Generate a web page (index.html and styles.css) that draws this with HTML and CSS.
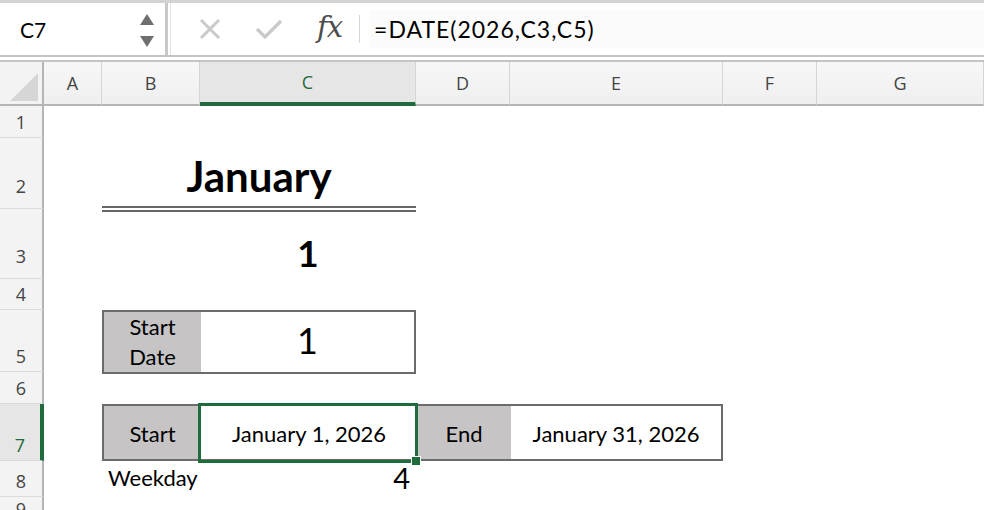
FILE: index.html
```html
<!DOCTYPE html>
<html>
<head>
	<meta charset="utf-8">
	<title>Calendar - DATE</title>
	<link rel="stylesheet" href="styles.css">
</head>
<body>
	<div class="toolbar">
		<div class="namebox">
			<span class="ref">C7</span>
			<div class="spin">
				<svg width="16" height="34" viewBox="0 0 16 34">
					<polygon points="8,1 15,12 1,12" fill="#6f6f6f"/>
					<polygon points="1,23 15,23 8,34" fill="#6f6f6f"/>
				</svg>
			</div>
		</div>
		<div class="fbar">
			<svg class="ico-x" width="22" height="22" viewBox="0 0 22 22">
				<path d="M2 2 L20 20 M20 2 L2 20" stroke="#c9c9c9" stroke-width="3" fill="none"/>
			</svg>
			<svg class="ico-ok" width="28" height="22" viewBox="0 0 28 22">
				<path d="M2 11 L10 19 L26 3" stroke="#c9c9c9" stroke-width="3.2" fill="none"/>
			</svg>
			<span class="fx">fx</span>
			<span class="sep"></span>
			<div class="formula">=DATE(2026,C3,C5)</div>
		</div>
	</div>

	<div class="sheet">
		<!-- column headers -->
		<div class="corner"><span class="tri"></span></div>
		<div class="ch">A</div>
		<div class="ch">B</div>
		<div class="ch active">C</div>
		<div class="ch">D</div>
		<div class="ch">E</div>
		<div class="ch">F</div>
		<div class="ch">G</div>

		<!-- row headers -->
		<div class="rh" style="grid-row: 2">1</div>
		<div class="rh tall" style="grid-row: 3">2</div>
		<div class="rh tall" style="grid-row: 4">3</div>
		<div class="rh" style="grid-row: 5">4</div>
		<div class="rh" style="grid-row: 6">5</div>
		<div class="rh" style="grid-row: 7">6</div>
		<div class="rh active" style="grid-row: 8">7</div>
		<div class="rh" style="grid-row: 9">8</div>
		<div class="rh" style="grid-row: 10">9</div>

		<!-- cells -->
		<div class="month">January</div>
		<div class="monthnum">1</div>

		<div class="startbox">
			<div class="lbl wrap">Start<br>Date</div>
			<div class="val big">1</div>
		</div>

		<div class="datebox">
			<div class="lbl">Start</div>
			<div class="val">January 1, 2026</div>
			<div class="lbl">End</div>
			<div class="val">January 31, 2026</div>
		</div>
		<div class="selection"><span class="handle"></span></div>

		<div class="weekday">Weekday</div>
		<div class="wdnum">4</div>
	</div>
</body>
</html>
```

FILE: styles.css
```css
body
{
	margin: 0;
	font-family: Lato, "Liberation Sans", sans-serif;
	color: #000;
	background: #fff;
	overflow: hidden;
}

/* top bar */
.toolbar
{
	display: flex;
	height: 52px;
	border-top: 3px solid #d3d3d3;
	border-bottom: 2px solid #c4c4c4;
}
.namebox
{
	display: flex;
	align-items: center;
	justify-content: space-between;
	width: 168px;
	border-right: 3px solid #c8c8c8;
	padding: 0 10px 0 20px;
	box-sizing: border-box;
}
.ref
{
	font-size: 21px;
}
.spin
{
	display: flex;
	padding-top: 2px;
}
.fbar
{
	flex: 1;
	display: flex;
	align-items: center;
	margin-left: 2px;
	border-left: 1px solid #e2e2e2;
}
.ico-x
{
	margin-left: 28px;
}
.ico-ok
{
	margin-left: 34px;
}
.fx
{
	margin-left: 34px;
	font-family: "DejaVu Serif", "Liberation Serif", serif;
	font-style: italic;
	font-size: 29px;
	color: #4d4d4d;
	letter-spacing: -1px;
	padding-bottom: 5px;
}
.sep
{
	width: 1px;
	height: 28px;
	background: #d6d6d6;
	margin-left: 17px;
}
.formula
{
	flex: 1;
	margin-left: 10px;
	padding-left: 4px;
	font-size: 23px;
	letter-spacing: 1px;
	line-height: 38px;
	background: #fbfbfb;
}

/* grid */
.sheet
{
	display: grid;
	grid-template-columns: 44px 58px 98px 216px 94px 213px 94px 1fr;
	grid-template-rows: 44px 32px 71px 70px 31px 62px 32px 57px 36px 1fr;
	height: 453px;
	margin-top: 3px;
	border-top: 2px solid #c4c4c4;
	box-sizing: border-box;
}
.corner
{
	grid-column: 1;
	grid-row: 1;
	position: relative;
	background: #f3f3f3;
	border-right: 2px solid #b5b5b5;
	border-bottom: 2px solid #b5b5b5;
}
.tri
{
	position: absolute;
	right: 4px;
	bottom: 3px;
	width: 0;
	height: 0;
	border-left: 28px solid transparent;
	border-bottom: 28px solid #d6d6d6;
}
.ch
{
	display: flex;
	align-items: center;
	justify-content: center;
	background: linear-gradient(#f7f7f7, #efefef);
	border-right: 1px solid #d5d5d5;
	border-bottom: 2px solid #b5b5b5;
	font-family: "Open Sans", Lato, sans-serif;
	font-size: 18px;
	color: #444;
	grid-row: 1;
}
.ch.active
{
	background: #e6e6e6;
	color: #1e6b3c;
	border-bottom: 4px solid #1e6b3c;
}
.rh
{
	grid-column: 1;
	display: flex;
	align-items: flex-end;
	justify-content: center;
	padding-bottom: 3px;
	background: #f3f3f3;
	border-right: 2px solid #b5b5b5;
	border-bottom: 1px solid #dadada;
	font-family: "Open Sans", Lato, sans-serif;
	font-size: 18px;
	color: #444;
	box-sizing: border-box;
}
.rh.tall
{
	padding-bottom: 10px;
}
.rh.active
{
	background: #e6e6e6;
	color: #1e6b3c;
	border-right: 4px solid #1e6b3c;
}

/* cell content */
.month
{
	grid-column: 3 / 5;
	grid-row: 3;
	display: flex;
	align-items: flex-end;
	justify-content: center;
	padding-bottom: 9px;
	margin-bottom: -3px;
	border-bottom: 6px double #666;
	font-size: 42px;
	font-weight: bold;
	line-height: 1;
}
.monthnum
{
	grid-column: 4;
	grid-row: 4;
	display: flex;
	align-items: flex-end;
	justify-content: center;
	padding-bottom: 8px;
	font-size: 37px;
	font-weight: bold;
	line-height: 1;
}
.startbox
{
	grid-column: 3 / 5;
	grid-row: 6;
	display: grid;
	grid-template-columns: 97px 1fr;
	grid-template-rows: 1fr;
	border: 2px solid #6b6b6b;
	margin-bottom: -2px;
	overflow: hidden;
}
.datebox
{
	grid-column: 3 / 7;
	grid-row: 8;
	display: grid;
	grid-template-columns: 97px 216px 94px 1fr;
	border: 2px solid #6b6b6b;
}
.lbl
{
	display: flex;
	align-items: center;
	justify-content: center;
	background: #c6c4c5;
	font-size: 22px;
	padding-top: 1px;
}
.lbl.wrap
{
	text-align: center;
	line-height: 30px;
	padding-top: 0;
}
.val
{
	display: flex;
	align-items: center;
	justify-content: center;
	font-size: 22px;
	padding-top: 1px;
}
.val.big
{
	font-size: 36px;
	padding-top: 0;
	padding-bottom: 4px;
}
.selection
{
	grid-column: 4;
	grid-row: 8;
	position: relative;
	margin: -1px -2px -2px -2px;
	border: 3px solid #1e6b3c;
}
.handle
{
	position: absolute;
	right: -6px;
	bottom: -6px;
	width: 8px;
	height: 8px;
	background: #1e6b3c;
	border: 1px solid #fff;
}
.weekday
{
	grid-column: 3;
	grid-row: 9;
	display: flex;
	align-items: flex-end;
	padding: 0 0 6px 6px;
	font-size: 22px;
}
.wdnum
{
	grid-column: 4;
	grid-row: 9;
	display: flex;
	align-items: flex-end;
	justify-content: flex-end;
	padding: 0 6px 5px 0;
	font-size: 29px;
	line-height: 1;
}
```
